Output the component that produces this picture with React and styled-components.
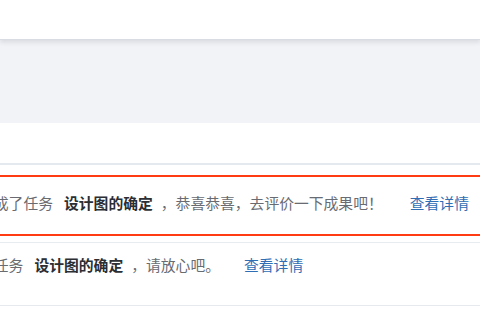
import React from 'react';
import styled, { createGlobalStyle } from 'styled-components';

const GlobalStyle = createGlobalStyle`
  html, body {
    margin: 0;
    padding: 0;
    background: #ffffff;
    overflow: hidden;
  }
  body {
    width: 480px;
    height: 320px;
    font-family: "PingFang SC", "Noto Sans CJK SC", "Noto Sans", sans-serif;
  }
`;

const Page = styled.div`
  width: 480px;
  height: 320px;
  overflow: hidden;
  background: #ffffff;
`;

const Header = styled.div`
  position: relative;
  z-index: 1;
  height: 39px;
  background: #ffffff;
  border-bottom: 1px solid #d9dce2;
  box-shadow: 0 2px 5px rgba(40, 50, 70, 0.14);
`;

const Band = styled.div`
  height: 83px;
  background: #f2f3f7;
`;

const Panel = styled.div`
  height: 40px;
  background: #ffffff;
  border-bottom: 2px solid #e4e9ef;
`;

const Feed = styled.div`
  margin-top: 10px;
  margin-left: -21px;
  width: 503px;
`;

const Item = styled.div`
  display: flex;
  align-items: ${p => (p.$active ? 'center' : 'flex-start')};
  height: ${p => (p.$active ? '61px' : '64px')};
  padding-top: ${p => (p.$active ? '0' : '11px')};
  box-sizing: border-box;
  border-top: ${p => (p.$active ? '2px solid #ff3b14' : '1px solid #e8ecf0')};
  border-bottom: ${p => (p.$active ? '2px solid #ff3b14' : '1px solid #e6eaef')};
  margin-bottom: ${p => (p.$active ? '6px' : '0')};
  font-size: 14.8px;
  line-height: 22px;
  white-space: nowrap;
`;

const Message = styled.span`
  color: #686b71;
  margin-top: ${p => (p.$active ? '-5px' : '0')};
`;

const Task = styled.b`
  color: #2b2e33;
  font-weight: 700;
  margin: 0 8px 0 11px;
`;

const Link = styled.a`
  color: #2f6db5;
  text-decoration: none;
  margin-left: ${p => p.$gap}px;
  margin-top: ${p => (p.$active ? '-5px' : '0')};
  cursor: pointer;
`;

const feed = [
  { id: 1, before: '完成了任务', task: '设计图的确定', after: '，恭喜恭喜，去评价一下成果吧！', gap: 27, active: true },
  { id: 2, before: '接任务', task: '设计图的确定', after: '，请放心吧。', gap: 24, active: false },
];

export default function App() {
  return (
    <Page>
      <GlobalStyle />
      <Header />
      <Band />
      <Panel />
      <Feed>
        {feed.map(item => (
          <Item key={item.id} $active={item.active}>
            <Message $active={item.active}>
              {item.before}
              <Task>{item.task}</Task>
              {item.after}
            </Message>
            <Link $gap={item.gap} $active={item.active}>查看详情</Link>
          </Item>
        ))}
      </Feed>
    </Page>
  );
}
